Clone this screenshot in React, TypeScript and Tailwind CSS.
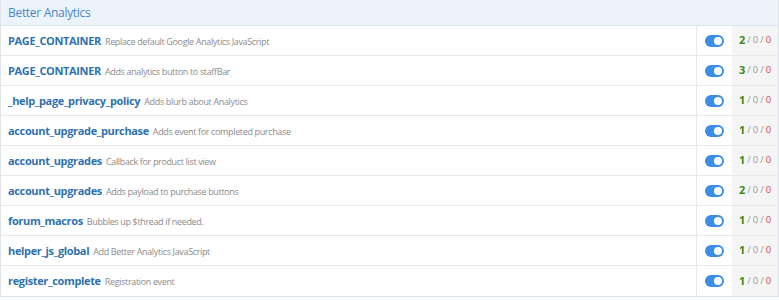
import React from "react"

type Row = { name: string; desc: string; count: number }

const rows: Row[] = [
  { name: "PAGE_CONTAINER", desc: "Replace default Google Analytics JavaScript", count: 2 },
  { name: "PAGE_CONTAINER", desc: "Adds analytics button to staffBar", count: 3 },
  { name: "_help_page_privacy_policy", desc: "Adds blurb about Analytics", count: 1 },
  { name: "account_upgrade_purchase", desc: "Adds event for completed purchase", count: 1 },
  { name: "account_upgrades", desc: "Callback for product list view", count: 1 },
  { name: "account_upgrades", desc: "Adds payload to purchase buttons", count: 2 },
  { name: "forum_macros", desc: "Bubbles up $thread if needed.", count: 1 },
  { name: "helper_js_global", desc: "Add Better Analytics JavaScript", count: 1 },
  { name: "register_complete", desc: "Registration event", count: 1 },
]

function Toggle() {
  return (
    <span className="relative inline-block w-[19px] h-[12px] rounded-full bg-[#3a8ee6]">
      <span className="absolute right-[2px] top-[2px] w-[8px] h-[8px] rounded-full bg-white" />
    </span>
  )
}

export default function App() {
  return (
    <div className="w-[779px] h-[300px] bg-[#fafbfc] font-['Open_Sans',sans-serif] overflow-hidden">
      <div className="border-l border-r border-b border-[#dfe3e8] bg-white">
        {/* header */}
        <div className="h-[26px] flex items-center pl-[7px] bg-[#edf3fb] border-b border-[#dbe3ec]">
          <h2 className="text-[12px] tracking-[-0.3px] text-[#4688c8] leading-none pt-[1px]">Better Analytics</h2>
        </div>

        {rows.map((row, i) => (
          <div key={i} className="flex h-[30px] border-b border-[#e7e9ec] last:border-b-0">
            <div className="flex-1 flex items-baseline pt-[7px] pl-[7px] min-w-0 whitespace-nowrap">
              <span className="text-[11px] font-bold tracking-[-0.35px] text-[#2f72ad]">{row.name}</span>
              <span className="ml-[4px] text-[9px] tracking-[-0.35px] text-[#8c8c8c]">{row.desc}</span>
            </div>
            <div className="w-[36px] flex items-center justify-center border-l border-[#e7e9ec]">
              <Toggle />
            </div>
            <div className="w-[46px] flex items-center pl-[7px] bg-[#f5f5f5] text-[9.5px] text-[#9a9a9a]">
              <span className="font-bold text-[#3b8b1a] text-[11px]">{row.count}</span>
              <span className="mx-[2px]">/</span>
              <span>0</span>
              <span className="mx-[2px]">/</span>
              <span className="text-[#d6454c]">0</span>
            </div>
          </div>
        ))}
      </div>
    </div>
  )
}
